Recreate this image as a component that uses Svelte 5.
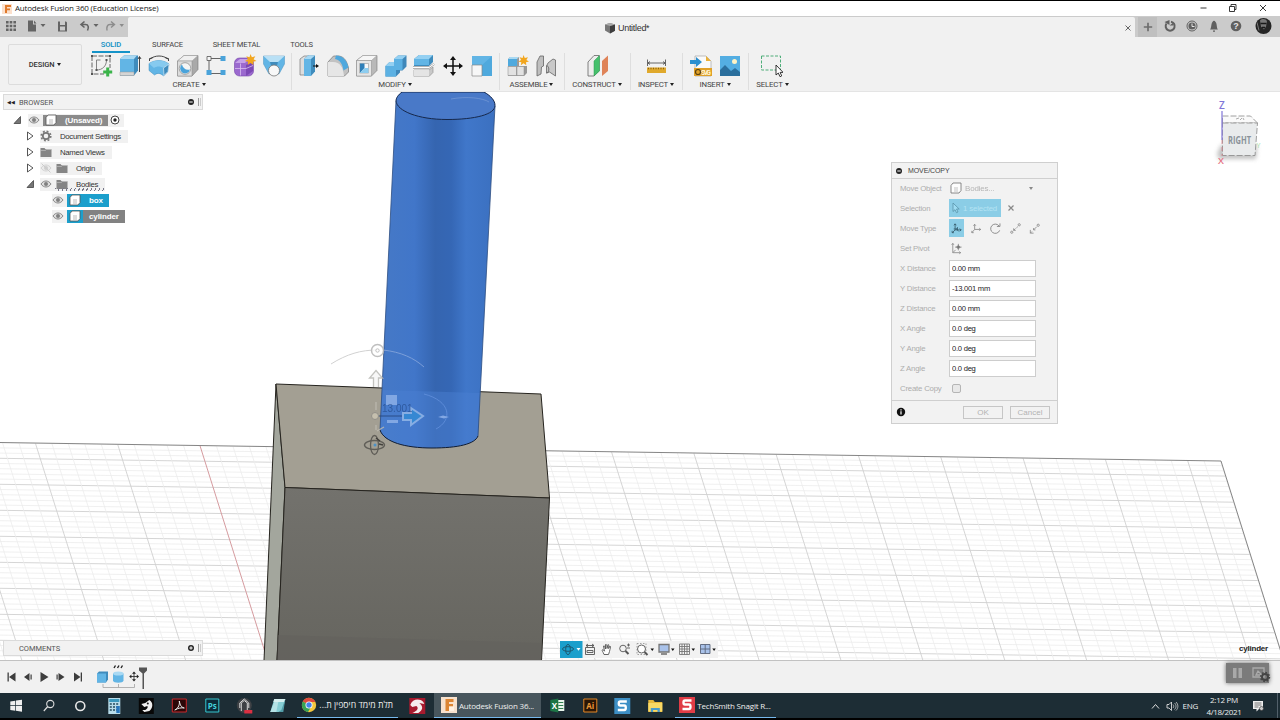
<script lang="ts">
  const tabs = [
    { label: 'SOLID', width: 38 },
    { label: 'SURFACE', width: 75 },
    { label: 'SHEET METAL', width: 63 },
    { label: 'TOOLS', width: 67 }
  ];
  let activeTab = 'SOLID';

  const groups = [
    { label: 'CREATE', width: 204, icons: ['sketch', 'extrude', 'revolve', 'hole', 'pattern', 'form', 'derive'] },
    { label: 'MODIFY', width: 208, icons: ['presspull', 'fillet', 'shell', 'combine', 'split', 'move', 'scale'] },
    { label: 'ASSEMBLE', width: 65, icons: ['component', 'joint'] },
    { label: 'CONSTRUCT', width: 66, icons: ['plane'] },
    { label: 'INSPECT', width: 52, icons: ['measure'] },
    { label: 'INSERT', width: 66, icons: ['svgfile', 'image'] },
    { label: 'SELECT', width: 48, icons: ['select'] }
  ];

  const fields = [
    { label: 'X Distance', value: '0.00 mm' },
    { label: 'Y Distance', value: '-13.001 mm' },
    { label: 'Z Distance', value: '0.00 mm' },
    { label: 'X Angle', value: '0.0 deg' },
    { label: 'Y Angle', value: '0.0 deg' },
    { label: 'Z Angle', value: '0.0 deg' }
  ];

  const moveTypes = ['free', 'translate', 'rotate', 'points', 'position'];

  // ground grid, in window coordinates
  const slant = 0.315;
  const tilt = 0.0145;
  const columns: { x: number; kind: string }[] = [];
  for (let i = -12; i < 75; i++) {
    const major = ((i % 5) + 5) % 5 === 0;
    columns.push({ x: 35.5 + i * 16.46, kind: i === 10 ? 'axis' : major ? 'major' : 'minor' });
  }
  const rows: { y: number; kind: string }[] = [];
  for (let i = -3; i < 40; i++) {
    rows.push({ y: 458.3 + i * 5.2, kind: ((i % 5) + 5) % 5 === 0 ? 'major' : 'minor' });
  }
</script>

{#snippet tool(name: string)}
  <svg class="tool" viewBox="0 0 24 24">
    {#if name === 'sketch'}
      <path d="M3 2h18v12M3 2v18h12" fill="none" stroke="#555" stroke-width=".9" stroke-dasharray="5 1.5" />
      <path d="M7.500 6v10M7.500 16c6 0 10-4 10-10M7.500 6h4" fill="none" stroke="#777" stroke-width=".9" />
      <path d="M2 1h2v2H2zM20 1h2v2h-2zM2 19h2v2H2zM6.500 15h2v2h-2zM16.500 5h2v2h-2z" fill="#555" />
      <path d="M17.200 13.500h3v3h3v3h-3v3h-3v-3h-3v-3h3z" fill="#3bb44a" />
    {:else if name === 'extrude'}
      <path d="M2 5l4-3.500h14v15l-4 5H2z" fill="#3f8cbd" />
      <path d="M2 5l4-3.500h13l-3 3.500z" fill="#a9d9f3" />
      <path d="M2 5h14v13H2z" fill="#62b5e5" />
      <path d="M2 18h14v3.500H2z" fill="#d5d5d5" stroke="#999" stroke-width=".5" />
      <path d="M21.500 18V3M20 5l1.500-2.500L23 5" fill="none" stroke="#333" stroke-width=".9" />
    {:else if name === 'revolve'}
      <path d="M2 9.500c6-4 14-4 20 .5l-1.500 8-4 4c-3-3-6-3.500-9-1L2 16.500z" fill="#62b5e5" stroke="#3f8cbd" stroke-width=".5" />
      <path d="M2 9.500c6-4 14-4 20 .5l-5.500 4c-3-2-7-2-9.500 0z" fill="#86caef" />
      <path d="M16.500 14l5.500-4-1 7.500-4 4z" fill="#3f8cbd" stroke="#d8e8f2" stroke-width=".7" />
      <path d="M3 5c5-4 13-4 18 0M2.500 7V4.500l3-.5M21.500 7V4.500l-3-.5" fill="none" stroke="#333" stroke-width=".9" />
    {:else if name === 'hole'}
      <path d="M1.500 7L8 1.500h14v14L16 22H1.500z" fill="#a9a9a9" stroke="#777" stroke-width=".6" />
      <path d="M1.500 7L8 1.500h14L16 7z" fill="#f0f0f0" stroke="#999" stroke-width=".5" />
      <path d="M1.500 7H16v15H1.500z" fill="#dcdcdc" stroke="#888" stroke-width=".5" />
      <circle cx="9" cy="14.500" r="5.800" fill="#f5f5f5" stroke="#777" stroke-width=".6" />
      <path d="M6 10.500a5 5 0 1 0 8 5c-4 1-7-1-8-5z" fill="#4aa3da" />
    {:else if name === 'pattern'}
      <path d="M5 4.500h15M5 4.500v15h15" fill="none" stroke="#555" stroke-width=".9" />
      <path d="M3 2.500h4v4H3z" fill="#f5f5f5" stroke="#555" stroke-width=".8" />
      <path d="M16.500 2h5v5h-5zM2.500 16h5v5h-5zM16.500 16h5v5h-5z" fill="#4aa3da" />
    {:else if name === 'form'}
      <rect x="1.500" y="4" width="19" height="18" rx="5" fill="#9b69cf" stroke="#7444a8" stroke-width=".6" />
      <path d="M2 9l5-4h9l-4 4z" fill="#c6a2e8" />
      <path d="M13 22V11l7-5v11z" fill="#7d49b5" />
      <path d="M7.500 9.500v12M2 14.500h11l7-3" fill="none" stroke="#d8bff0" stroke-width=".8" />
      <path d="M17.500 0l1.400 3.300 3.400-1-1.700 3 2.900 1.700-3.300.7.300 3.400-3-2.200-2.900 2.200.6-3.400-3.300-.6 3-1.800-1.600-3 3.200 1z" fill="#f2a61e" />
    {:else if name === 'derive'}
      <path d="M1.500 2h21v8L17 20H7L1.500 10z" fill="#62b5e5" stroke="#4a93c0" stroke-width=".5" />
      <path d="M1.500 2L8 8h8l6.500-6z" fill="#b9e0f5" />
      <path d="M8 8h8l-2 7h-4z" fill="#3f8cbd" />
      <circle cx="12" cy="16.500" r="5.500" fill="#f8f8f8" stroke="#777" stroke-width=".8" />
    {:else if name === 'presspull'}
      <path d="M3 5l4-3h5v19H3z" fill="#ddd" stroke="#777" stroke-width=".7" />
      <path d="M7 5l4-3.500h7v16L14 22H7z" fill="#3f8cbd" />
      <path d="M7 5l4-3.500h7L14 5z" fill="#a9d9f3" />
      <path d="M7 5h7v17H7z" fill="#62b5e5" />
      <path d="M16 12h4" stroke="#111" stroke-width="1" />
      <path d="M19 10l3 2-3 2z" fill="#111" />
    {:else if name === 'fillet'}
      <path d="M2 22V8l5.500-6H13c6 1 8 6 9.500 12v4l-4 4z" fill="#c2c2c2" stroke="#777" stroke-width=".7" />
      <path d="M2 8h5c7 0 10 5 11 14H2z" fill="#e6e6e6" />
      <path d="M10 1.500c7 0 11 5 12.500 12l-5 3C16.500 10 14 6 9 5z" fill="#4fa8dd" />
    {:else if name === 'shell'}
      <path d="M1.500 6.500L8 1.500h14v15L16.500 22h-15z" fill="#b9b9b9" stroke="#777" stroke-width=".6" />
      <path d="M1.500 6.500L8 1.500h14l-5.500 5z" fill="#f6f6f6" stroke="#999" stroke-width=".5" />
      <path d="M1.500 6.500h15V22h-15z" fill="#e6e6e6" stroke="#888" stroke-width=".5" />
      <path d="M4.500 9.500h9V19h-9z" fill="#f8f8f8" stroke="#888" stroke-width=".5" />
      <path d="M5 9.500h4.500V14L5 19z" fill="#2f7fb8" />
      <path d="M5 19l4.500-5h4v5z" fill="#8dcdf0" />
    {:else if name === 'combine'}
      <path d="M1.500 12l4-4H10V5l4-3.500h8.500v11l-4 4H16v2l-4 4H1.500z" fill="#3f88ba" />
      <path d="M10 5l4-3.500h8.500L18.500 5zM1.500 12l4-4H10v4z" fill="#94d0f2" />
      <path d="M10 5h8.500v11H12v6.500H1.500V12H10z" fill="#5cb1e3" />
    {:else if name === 'split'}
      <path d="M2 5l5-4h14v7l-4 4H2z" fill="#3f8cbd" />
      <path d="M2 5l5-4h14l-4 4z" fill="#94d0f2" />
      <path d="M2 5h15v6H2z" fill="#62b5e5" />
      <path d="M2 16h15l4-3v5.500l-4 4H2z" fill="#c9c9c9" stroke="#888" stroke-width=".6" />
      <path d="M2 16h15v6.500H2z" fill="#e4e4e4" />
      <path d="M1 13.500h16l5-3.500" fill="none" stroke="#777" stroke-width="2" />
      <path d="M1 13.500h16l5-3.500" fill="none" stroke="#fff" stroke-width="1.200" />
    {:else if name === 'move'}
      <path d="M12 4v16M4 12h16" stroke="#111" stroke-width="1.500" />
      <path d="M12 2l3 4H9zM12 22l-3-4h6zM2 12l4-3v6zM22 12l-4 3V9z" fill="#111" />
    {:else if name === 'scale'}
      <path d="M2 2h20v20H2z" fill="#4fa9dd" />
      <path d="M2 2h20L12 11H2z" fill="#62b5e5" />
      <path d="M2 11h10v11H2z" fill="#f7f7f7" stroke="#888" stroke-width=".7" />
    {:else if name === 'component'}
      <path d="M2 5l2-2h9v9h8v7l-3 3H2z" fill="#999" />
      <path d="M2 5h9v7H2z" fill="#4fa9dd" />
      <path d="M2 5l2-2h9l-2 2z" fill="#a9d9f3" />
      <path d="M2 12.500h8.500v9H2zM11 12.500h7v9h-7z" fill="#e2e2e2" stroke="#888" stroke-width=".5" />
      <path d="M17.500 1l1.300 3 3.200-.8-1.600 2.700 2.600 1.600-3 .7.300 3.100-2.800-2-2.700 2 .6-3.100-3.100-.6 2.800-1.700-1.500-2.700 3 .8z" fill="#f2a61e" />
    {:else if name === 'joint'}
      <path d="M3 8l3-6h3.500v10l-2 1-.5 7-4 2z" fill="#bfbfbf" stroke="#666" stroke-width=".8" />
      <path d="M14 9l5-4 2.500 1v16l-6-4-3 1v-7z" fill="#c9c9c9" stroke="#666" stroke-width=".8" />
      <path d="M12.500 12c3-1 3 7 0 7" fill="none" stroke="#666" />
    {:else if name === 'plane'}
      <path d="M2 8l6-6.500h5V17l-5 5H2z" fill="#ededed" stroke="#666" stroke-width=".8" />
      <path d="M8 7l5.500-5.500V17L8 22z" fill="#45c06c" stroke="#2d9a51" stroke-width=".5" />
      <path d="M16 7l6-5.500V17l-6 5z" fill="#df8358" />
    {:else if name === 'measure'}
      <path d="M2 13.500h19V19H2z" fill="#e0a92c" />
      <path d="M3 14.500h17" stroke="#8d6410" stroke-width="1.600" stroke-dasharray="1 1.500" />
      <path d="M2.500 5.500V12M20.500 5.500V12M3 9h17M5 7.500L3 9l2 1.500M18 7.500L20 9l-2 1.500" fill="none" stroke="#444" stroke-width=".8" />
    {:else if name === 'svgfile'}
      <path d="M6 2h11l5 5v15H6z" fill="#fafafa" stroke="#999" stroke-width=".6" />
      <path d="M17 2l5 5h-5z" fill="#eab13a" />
      <path d="M5 14h18v8H5z" fill="#e0a12a" />
      <circle cx="9" cy="18" r="2.500" fill="none" stroke="#5b4310" stroke-width="1.200" />
      <text x="12" y="20.500" font-size="6.500" font-weight="bold" fill="#fff5d8" textLength="10">SVG</text>
      <path d="M1 6h6V3l6 5-6 5v-3H1z" fill="#2a8fd0" />
    {:else if name === 'image'}
      <path d="M2 2h20v20H2z" fill="#54aee2" />
      <path d="M2 22v-6l5-5 6 6 4-3 5 4v4z" fill="#2b6f9d" />
      <circle cx="16.500" cy="7.500" r="2.500" fill="#fff3c4" />
    {:else if name === 'select'}
      <path d="M2.500 2h19v14h-19z" fill="none" stroke="#3ca66c" stroke-width=".9" stroke-dasharray="3 1.500" />
      <path d="M17 11v10l2.300-2 1.700 3.700 1.700-.8-1.600-3.500h3z" fill="#fff" stroke="#222" stroke-width=".9" />
    {/if}
  </svg>
{/snippet}

{#snippet eye(off = false)}
  <svg class="glyph" viewBox="0 0 12 12" opacity={off ? 0.3 : 1}>
    <path d="M1 6c2.500-4 7.500-4 10 0-2.500 4-7.500 4-10 0z" fill="#ddd" stroke="#888" />
    <circle cx="6" cy="6" r="2" fill="#808080" />
    {#if off}<path d="M1.500 1.500l9 9" stroke="#777" />{/if}
  </svg>
{/snippet}

{#snippet folder()}
  <svg class="glyph" viewBox="0 0 12 12">
    <path d="M.5 2h4l1 1.200h6V11H.5z" fill="#858585" />
    <path d="M.5 4.500h5l1-1h5" fill="none" stroke="#c8c8c8" stroke-width=".6" />
  </svg>
{/snippet}

{#snippet cube()}
  <svg class="glyph" viewBox="0 0 12 12">
    <path d="M1 3.500L3 1h8v7.500L9 11H1z" fill="#fff" stroke="#555" stroke-width=".8" />
    <path d="M4 5h4v5H4z" fill="#ddd" />
  </svg>
{/snippet}

{#snippet twist(open = false)}
  <svg class="twist" viewBox="0 0 8 10">
    {#if open}
      <path d="M7 1.500v7H.5z" fill="#777" stroke="#333" stroke-width=".7" />
    {:else}
      <path d="M1 1v8l5.500-4z" fill="#fff" stroke="#444" stroke-width=".9" />
    {/if}
  </svg>
{/snippet}

<div class="window">
  <header class="titlebar">
    <svg class="logo" viewBox="0 0 10 10"><path d="M0 0h10v10H0z" fill="#fbe0cc" /><path d="M3 1h6v2H5v1.500h3v1.700H5V9H3z" fill="#e07a2c" /></svg>
    <span class="title">Autodesk Fusion 360 (Education License)</span>
    <svg class="win-buttons" viewBox="0 0 72 12">
      <path d="M2.500 6h6M31.500 4.500h5v5h-5zM33 4.500v-2h5v5h-1.500M62 3l6 6M68 3l-6 6" fill="none" stroke="#222" stroke-width=".9" />
    </svg>
  </header>

  <div class="strip">
    <div class="quick">
      <svg viewBox="0 0 128 21">
        <g fill="#646464">
          <path d="M6 5h2.600v2.600H6zM9.700 5h2.600v2.600H9.700zM13.400 5H16v2.600h-2.600zM6 8.700h2.600v2.600H6zM9.700 8.700h2.600v2.600H9.700zM13.400 8.700H16v2.600h-2.600zM6 12.400h2.600V15H6zM9.700 12.400h2.600V15H9.700zM13.400 12.400H16V15h-2.600z" />
          <path d="M28 4.500h5v4h3v7h-8zM34 4.500l2.500 3H34zM40.500 8h5l-2.500 3z" />
          <path d="M58 5.500h8l1 1v9h-9zM60 5.500V9h5V5.500zM60 10.500v4h5v-4z" fill-rule="evenodd" />
          <path d="M93.500 8h5L96 11z" />
        </g>
        <path d="M84.500 5.500l-3.500 3 3.500 3M81.500 8.500h4c3 0 3.500 3 2 6" fill="none" stroke="#646464" stroke-width="1.600" />
        <path d="M111 5.500l3.500 3-3.500 3M114 8.500h-4c-3 0-3.500 3-3 6" fill="none" stroke="#8c8c8c" stroke-width="1.400" />
        <path d="M119.500 8h4.500l-2.200 3z" fill="#8c8c8c" />
      </svg>
    </div>
    <div class="doc-tab">
      <svg class="doc-cube" viewBox="0 0 12 12"><path d="M1 2.500L6 1l5 1.500v6.300L6 11.500 1 8.500z" fill="#777" /><path d="M6 4l5-1.500v6.300L6 11.500z" fill="#3e3e3e" /><path d="M1 2.500L6 4l5-1.500L6 1z" fill="#aaa" /></svg>
      <span>Untitled*</span>
      <svg class="tab-close" viewBox="0 0 8 8"><path d="M1.500 1.500l5 5M6.500 1.500l-5 5" stroke="#666" /></svg>
    </div>
    <div class="new-tab"><svg viewBox="0 0 10 10"><path d="M5 .8v8.400M.8 5h8.400" stroke="#6d6d6d" stroke-width="1.700" /></svg></div>
    <svg class="strip-icons" viewBox="0 0 120 21">
      <path d="M8.500 7.500A4.500 4.500 0 1 0 13 5.700" fill="none" stroke="#606060" stroke-width="2" />
      <path d="M6.500 6l5-2v5zM11.500 9.500h4v-3z" fill="#606060" />
      <circle cx="34" cy="10" r="5" fill="#d0d0d0" stroke="#606060" />
      <circle cx="34" cy="10" r="3.600" fill="#606060" />
      <path d="M34 7.500v3h2.500" fill="none" stroke="#e5e5e5" />
      <path d="M52 13.500c1.500-1 1.200-7 2.500-7.500.6-1.700 2.400-1.700 3 0 1.500.5 1 6.500 2.500 7.500zM55 14.500h2v1.200h-2z" fill="#606060" />
      <circle cx="78" cy="10" r="5.300" fill="#606060" />
      <text x="78" y="13.300" text-anchor="middle" font-size="9" font-weight="bold" fill="#e5e5e5">?</text>
      <circle cx="105.500" cy="10" r="8" fill="#252525" />
      <path d="M102 4.500c2-2 6-2 7 1l-1 5-2 3-3-3z" fill="#777" />
      <path d="M102.500 7.500h6M104 11.500h3" stroke="#191919" stroke-width="1.300" />
      <path d="M99 6.500l2 8" stroke="#777" />
    </svg>
  </div>

  <div class="ribbon">
    <button class="workspace">DESIGN <i class="caret"></i></button>
    <div class="ribbon-main">
      <nav class="tabs">
        {#each tabs as tab}
          <button class="tab" class:active={tab.label === activeTab} style="width: {tab.width}px" on:click={() => (activeTab = tab.label)}>{tab.label}</button>
        {/each}
      </nav>
      <div class="groups">
        {#each groups as group}
          <div class="group" style="width: {group.width}px">
            <div class="group-icons">
              {#each group.icons as name}
                {@render tool(name)}
              {/each}
            </div>
            <div class="group-label">{group.label}<i class="caret"></i></div>
          </div>
        {/each}
      </div>
    </div>
  </div>

  <main class="viewport">
    <svg class="scene" viewBox="0 92 1280 568">
      <defs>
        <clipPath id="ground"><path d="M0 442.500L1221 461 1284 661H0z" /></clipPath>
        <linearGradient id="cyl" x1="0" x2="1">
          <stop offset="0" stop-color="#4679c6" />
          <stop offset=".3" stop-color="#4176c9" />
          <stop offset=".48" stop-color="#3565b0" />
          <stop offset=".62" stop-color="#3567b5" />
          <stop offset=".75" stop-color="#4077ca" />
          <stop offset="1" stop-color="#3b70c0" />
        </linearGradient>
        <linearGradient id="front" x1="0" x2="0" y1="0" y2="1">
          <stop offset="0" stop-color="#73726d" />
          <stop offset="1" stop-color="#66655f" />
        </linearGradient>
      </defs>

      <g clip-path="url(#ground)">
        {#each rows as row}
          <line class={row.kind} x1="0" y1={row.y} x2="1280" y2={row.y + 1280 * tilt} />
        {/each}
        {#each columns as col}
          <line class={col.kind} x1={col.x} y1={443 + col.x * 0.015} x2={col.x + 222 * slant} y2={665 + col.x * 0.015} />
        {/each}
      </g>
      <path d="M0 442.500L1221 461 1281 652" fill="none" stroke="#777" stroke-width=".9" />

      <g stroke="#26241f" stroke-linejoin="round">
        <path d="M276 384l9 103.500-8 173h-13z" fill="#a3a69d" />
        <path d="M276 384l265 10 8.500 104L285 487.500z" fill="#a39f93" />
        <path d="M285 487.500L549.500 498l-8 162.500H277z" fill="url(#front)" />
      </g>
      <path d="M277.500 635l264 8v17h-264z" fill="#62615c" opacity=".55" />

      <path d="M402 92c-4 3-6 6-6 9L380 430c4 12 25 18 52 18 26 0 43-4 46-12l17-330c0-5-4-10-11-14z" fill="url(#cyl)" />
      <path d="M382 390l98 3-2 43c-3 8-20 12-46 12-27 0-48-6-52-18z" fill="#4b80d3" opacity=".45" />
      <path d="M402 92c-4 3-6 6-6 9 1 10 22 18.500 51 18.500 28 0 48-5 48-14 0-5-4-9.500-11-13.500z" fill="#4979c8" stroke="#16284b" />
      <path d="M396 101L380 430M495 106l-17 330" stroke="#2c4d80" stroke-width=".8" fill="none" />
      <path d="M380 430c4 12 25 18 52 18 26 0 43-4 46-12" fill="none" stroke="#111d33" />
      <path d="M451 99c16-3 32-1 38 3" fill="none" stroke="#8aa9dc" stroke-width=".7" opacity=".7" />

      <g class="manipulator" fill="none">
        <path d="M331 364c16-10 30-14 46-14" stroke="#c9c9c9" />
        <path d="M383 350c18 2 31 8 41 17" stroke="#86a6dc" />
        <circle cx="377.500" cy="350.500" r="6" fill="#fff" fill-opacity=".75" stroke="#b5b5b5" stroke-width="1.500" />
        <circle cx="377.500" cy="350.500" r="1.700" stroke="#b5b5b5" />
        <path d="M373.500 387v-9h-4l6.500-7.500 6.500 7.500h-4v9" fill="#eee" fill-opacity=".6" stroke="#b9b9b5" stroke-width="1.300" />
        <path d="M376 402v8M376 425v5M377 431l7-4" stroke="#bdbab1" stroke-width="1.300" />
        <path d="M386 395h11v10h-11z" fill="#8db0e8" />
        <path d="M387 420h11v3h-11z" fill="#8db0e8" />
        <path d="M424 394c27 7 29 26 12 35" stroke="#618fdb" />
        <path d="M438 417l5-1.500 6 1.500-5 1.500z" fill="#8fb2ea" />
        <path d="M375 416h30" stroke="#25457d" />
        <path d="M403 413h8v-5l12 8-12 9v-5h-8z" fill="#348bd5" stroke="#93b7e8" stroke-width="2" />
        <circle cx="375" cy="416" r="3.500" fill="#cbc5b3" stroke="#8e8c86" />
        <ellipse cx="374.500" cy="445" rx="10" ry="4.500" stroke="#55534e" stroke-width="1.400" />
        <ellipse cx="374.500" cy="445" rx="4" ry="9.500" stroke="#55534e" stroke-width="1.300" />
        <circle cx="375" cy="445" r="1.500" fill="#3f8fd0" />
        <path d="M376 438l4 3M379 444l4 1" stroke="#33322f" stroke-width="1.500" />
      </g>
      <text class="readout" x="382" y="412">13.001</text>
    </svg>

    <section class="browser">
      <div class="bar">
        <span class="rewind">◀◀</span>
        <span class="bar-title">BROWSER</span>
        <svg class="dot" viewBox="0 0 8 8"><circle cx="4" cy="4" r="3" fill="#222" /><path d="M2.300 4h3.400" stroke="#fff" /></svg>
        <i class="grip"></i>
      </div>
      <ul class="tree">
        <li class="root">
          {@render twist(true)}
          <div class="node">
            {@render eye()}
            <span class="tag dark">{@render cube()}<b class="root-name">(Unsaved)</b></span>
            <svg class="glyph" viewBox="0 0 12 12"><circle cx="6" cy="6" r="4" fill="#fff" stroke="#444" /><circle cx="6" cy="6" r="1.700" fill="#222" /></svg>
          </div>
        </li>
        <li class="level1">
          {@render twist()}
          <div class="node">
            <svg class="glyph" viewBox="0 0 12 12"><circle cx="6" cy="6" r="3.200" fill="none" stroke="#777" stroke-width="1.800" /><circle cx="6" cy="6" r="4.800" fill="none" stroke="#777" stroke-width="1.600" stroke-dasharray="1.900 1.870" /></svg>
            <span class="name">Document Settings</span>
          </div>
        </li>
        <li class="level1">
          {@render twist()}
          <div class="node">{@render folder()}<span class="name">Named Views</span></div>
        </li>
        <li class="level1">
          {@render twist()}
          <div class="node">{@render eye(true)}<span class="gap"></span>{@render folder()}<span class="name">Origin</span></div>
        </li>
        <li class="level1">
          {@render twist(true)}
          <div class="node hatched">{@render eye()}<span class="gap"></span>{@render folder()}<span class="name">Bodies</span></div>
        </li>
        <li class="level2">
          <div class="node">{@render eye()}<span class="tag blue">{@render cube()}<b class="body-name">box</b></span></div>
        </li>
        <li class="level2">
          <div class="node">{@render eye()}<span class="tag blue">{@render cube()}<b class="body-name gray">cylinder</b></span></div>
        </li>
      </ul>
    </section>

    <svg class="viewcube" viewBox="0 0 56 76">
      <defs><filter id="soft" x="-30%" y="-30%" width="160%" height="160%"><feGaussianBlur stdDeviation="2" /></filter></defs>
      <path d="M7 58l4-9h36l-1 14H9z" fill="#999" opacity=".6" filter="url(#soft)" />
      <path d="M12.500 20h28l7 7H12.500z" fill="#fafafa" stroke="#888" stroke-width=".8" stroke-dasharray="6 2" />
      <path d="M12.500 27h35l-2.500 32.500H12.500z" fill="#e9ebec" stroke="#888" stroke-width=".8" stroke-dasharray="6 2" />
      <path d="M26 23l3-1M30 24l2-2M34 24l-1-2" stroke="#777" stroke-width=".6" />
      <path d="M12 15v29" stroke="#8075d8" stroke-width="1.200" />
      <path d="M12 44v16" stroke="#d9848e" stroke-width=".8" stroke-dasharray="4 3" />
      <text class="axis-z" x="12" y="13">Z</text>
      <text class="axis-x" x="11" y="68">X</text>
      <text class="axis-y" x="48.500" y="51.500">Y</text>
      <text class="face" x="18" y="47.500" textLength="23" lengthAdjust="spacingAndGlyphs">RIGHT</text>
    </svg>

    <section class="dialog">
      <div class="dialog-head">
        <svg class="dot" viewBox="0 0 8 8"><circle cx="4" cy="4" r="3" fill="#222" /><path d="M2.300 4h3.400" stroke="#fff" /></svg>
        <span>MOVE/COPY</span>
      </div>
      <div class="dialog-body">
        <div class="field">
          <span class="label">Move Object</span>
          <div class="picker">{@render cube()}<span>Bodies...</span><i class="caret"></i></div>
        </div>
        <div class="field">
          <span class="label">Selection</span>
          <div class="selected">
            <svg viewBox="0 0 10 12"><path d="M2 1v8.500l2-1.800 1.500 3 1.500-.7-1.500-3h2.700z" fill="#9edcf2" stroke="#5893aa" stroke-width=".8" /></svg>
            1 selected
          </div>
          <svg class="clear" viewBox="0 0 8 8"><path d="M1.500 1.500l5 5M6.500 1.500l-5 5" stroke="#888" stroke-width="1.200" /></svg>
        </div>
        <div class="field">
          <span class="label">Move Type</span>
          <div class="types">
            {#each moveTypes as type, i}
              <button class="type" class:on={i === 0} aria-label={type}>
                <svg viewBox="0 0 14 14" fill="none" stroke={i === 0 ? '#34596a' : '#888'} stroke-width=".9">
                  {#if type === 'free'}
                    <path d="M5.500 2v6.500h6.500M5.500 8.500L2.500 11.500M4.200 3.500L5.500 2l1.300 1.500M10.500 7L12 8.500 10.500 10M2.300 9.500v2h2M8 5.500v3M4 7.500h4M7 7l2 3" />
                  {:else if type === 'translate'}
                    <path d="M5 2.500V8h6.500M5 8l-3 3.500M3.700 4L5 2.500 6.300 4M10 6.700L11.500 8 10 9.300M2 9.500v2h2" />
                  {:else if type === 'rotate'}
                    <path d="M11 4.500A5 5 0 1 0 11.500 9M11.800 1.500v3.300H8.500" stroke-width="1" />
                  {:else if type === 'points'}
                    <circle cx="3" cy="11" r="1.200" /><circle cx="11" cy="3" r="1.200" /><path d="M9.500 5L8 6.300M7 7L5 9M5 6.800V9h2.300" />
                  {:else}
                    <path d="M2.500 8.500V12H6M2.500 12l1.800-1.800M9.500 5L6 8.500M6 6.500v2h2" /><circle cx="11" cy="3.500" r="1.200" />
                  {/if}
                </svg>
              </button>
            {/each}
          </div>
        </div>
        <div class="field">
          <span class="label">Set Pivot</span>
          <svg class="pivot" viewBox="0 0 14 14" fill="none" stroke="#888" stroke-width=".9"><path d="M3 1.500V11.500h8.500M1.800 3L3 1.500 4.200 3M10 10.300l1.500 1.200L10 12.700M3 11.500l3-3" /><path d="M9 2v7M5.500 5.500h7" /><path d="M9 3.500l2 2-2 2-2-2z" fill="#777" /></svg>
        </div>
        {#each fields as field, i}
          <div class="field">
            <label for="f{i}">{field.label}</label>
            <input id="f{i}" bind:value={field.value} />
          </div>
        {/each}
        <div class="field">
          <span class="label">Create Copy</span>
          <span class="check"></span>
        </div>
      </div>
      <div class="dialog-foot">
        <svg class="info" viewBox="0 0 10 10"><circle cx="5" cy="5" r="4.200" fill="#111" /><path d="M5 4.300v3.200M5 2.200v1.200" stroke="#fff" stroke-width="1.200" /></svg>
        <button class="ok">OK</button>
        <button class="cancel">Cancel</button>
      </div>
    </section>

    <div class="bar comments">
      <span class="bar-title">COMMENTS</span>
      <svg class="dot" viewBox="0 0 8 8"><circle cx="4" cy="4" r="3" fill="#222" /><path d="M2.300 4h3.400M4 2.300v3.400" stroke="#fff" /></svg>
      <i class="grip"></i>
    </div>

    <svg class="navbar" viewBox="0 0 158 17">
      <path d="M0 0h158v17H0z" fill="#f2f2f2" />
      <path d="M0 0h22.500v17H0z" fill="#1b9fcc" />
      <g fill="none" stroke="#1c5066" stroke-width=".9"><ellipse cx="8" cy="8" rx="5.500" ry="2.300" /><ellipse cx="8" cy="8.500" rx="2.300" ry="5" /></g>
      <path d="M16.500 7h4l-2 2.700z" fill="#fff" />
      <g fill="none" stroke="#555" stroke-width=".9">
        <path d="M25.500 6.500h9v7h-9zM27 9.500h6v2h-6zM26 4.500h8M28 3l-2 1.500L28 6M32 3l2 1.500L32 6" />
        <path d="M44 13.500c-1-3-2.500-4-1.500-4.800 1 0 1.500 1 2 1.500L43.500 5c1-1 1.500 1 2 3V3.500c1-1 1.500 1 1.500 4l1-4c1.200 0 .8 2 .5 4l1.500-2.500c1 .5 0 3-.5 5.500l-1 3z" fill="#fff" />
        <circle cx="63" cy="7.500" r="3.300" /><path d="M65.500 10l3 3" stroke-width="2" /><path d="M67 4h3M68.500 2.500v3M67 7h3" />
        <path d="M77 2.500h9v11h-9z" stroke-dasharray="1.500 1.500" stroke="#999" /><circle cx="81.500" cy="8" r="4" fill="#fff" /><path d="M84.500 11l3 3" stroke-width="2" />
        <path d="M99 3.500h10v7.500h-10z" fill="#a9c2ea" stroke="#777" stroke-width="1.300" /><path d="M101 13h6" stroke-width="1.300" />
        <path d="M119.500 3h10v10.500h-10zM122 3v10.500M124.500 3v10.500M127 3v10.500M119.500 5.500h10M119.500 8h10M119.500 10.500h10" stroke="#777" />
        <path d="M140.500 3.500h9.500v9h-9.500zM145.200 3.500v9M140.500 8h9.500" fill="#a9c2ea" stroke="#5a6478" />
      </g>
      <path d="M90.500 7.500h3.500l-1.700 2.500zM111 7.500h3.500l-1.700 2.500zM131.500 7.500h3.500l-1.700 2.500zM152.300 7.500h3.500l-1.700 2.500z" fill="#111" />
    </svg>
    <span class="hint">cylinder</span>
  </main>

  <footer class="timeline">
    <svg class="playback" viewBox="0 0 90 33">
      <g fill="#3d3d3d">
        <path d="M7.500 11.500h1.300v9H7.500zM15.500 11.500v9L9 16zM29.500 12v8L24 16zM30.500 13.500h1.200v5h-1.200zM40.500 11v10l8-5zM56.500 13.500h1.200v5h-1.200zM58.500 12v8l6-4zM74 11.500v9l6.500-4.500zM80.700 11.500H82v9h-1.300z" />
      </g>
    </svg>
    <svg class="history" viewBox="0 0 60 33">
      <path d="M7 12.500l2-2h9v8l-2 3H7z" fill="#3f8cbd" /><path d="M7 12.500h9v9H7z" fill="#62b5e5" />
      <path d="M23 12.500v7c0 3 10.500 3 10.500 0v-7z" fill="#62b5e5" /><ellipse cx="28.300" cy="12.500" rx="5.200" ry="2" fill="#a9d9f3" />
      <path d="M24 7l1.500-2.500M27.500 7L29 4.500M31 7l1.500-2.500" stroke="#222" stroke-width="1.400" />
      <path d="M44 12v7M40.500 15.500h7" stroke="#333" stroke-width=".9" /><path d="M44 10.500l2 2.200h-4zM44 20.500l-2-2.200h4zM39.200 15.500l2.200-2v4zM49 15.500l-2.200 2v-4z" fill="#222" />
      <path d="M13 23v3.500h31.500V23M28.500 23v3.500" fill="none" stroke="#aaa" stroke-width=".9" />
      <path d="M49 6.500h8v3l-3 3V28h-1.500V12.500L49 9.500z" fill="#555" />
    </svg>
    <svg class="recorder" viewBox="0 0 46 26">
      <path d="M1 2h43v20H1z" fill="#7b7b7b" />
      <path d="M8 7h3.500v10H8zM13.500 7H17v10h-3.500z" fill="#a9a9a9" />
      <path d="M28 7h11v9H28zM31 14l2-4 4 4z" fill="none" stroke="#aaa" stroke-width="1.300" />
      <circle cx="40" cy="16" r="3" fill="none" stroke="#444" stroke-width="2" /><circle cx="40" cy="16" r="4.500" fill="none" stroke="#444" stroke-width="1.300" stroke-dasharray="1.700 1.800" />
    </svg>
  </footer>

  <div class="taskbar">
    <svg class="task" viewBox="0 0 32 25"><path d="M10 8.500l5-.8v4.600h-5zM15.700 7.600l6-.9v5.600h-6zM10 13h5v4.700l-5-.7zM15.700 13h6v5.700l-6-.9z" fill="#eee" /></svg>
    <svg class="task" viewBox="0 0 32 25"><circle cx="17" cy="11" r="3.600" fill="none" stroke="#ddd" stroke-width="1.100" /><path d="M14.500 13.500L10.500 18" stroke="#ddd" stroke-width="1.200" /></svg>
    <svg class="task" viewBox="0 0 32 25"><circle cx="15" cy="13" r="4.500" fill="none" stroke="#e8e8e8" stroke-width="1.600" /></svg>
    <svg class="task" viewBox="0 0 32 25"><path d="M10 5h12v16H10z" fill="#b7dcea" /><path d="M11 6h10v3H11z" fill="#3a98bd" /><path d="M11.500 11h9M11.500 14h9M11.500 17h9" stroke="#476d7e" stroke-width="1.800" stroke-dasharray="2 1.200" /><path d="M18 13h3.500v7H18z" fill="#2776bd" /></svg>
    <svg class="task" viewBox="0 0 32 25"><path d="M8.500 5h15v16h-15z" fill="#070707" /><path d="M11 11l4-1 4-3c4 2 4 8 0 11l-5 1-2-2 3 0c2-1 3-3 2-4l-3 1z" fill="#eee" /><circle cx="17.500" cy="10.500" r="1" fill="#111" /></svg>
    <svg class="task" viewBox="0 0 32 25"><path d="M9 6h14v13H9z" fill="#2b0707" stroke="#c8292c" /><path d="M11.500 17c4-2 5-6 4.500-9 1 5 2 6 5 7-3-.5-6 0-9.500 2z" fill="none" stroke="#eee" /></svg>
    <svg class="task" viewBox="0 0 32 25"><path d="M9.500 6h13v13h-13z" fill="#0c2b39" stroke="#36c6cf" /><text x="16" y="16" text-anchor="middle" font-size="8" font-weight="bold" fill="#43d0dc">Ps</text></svg>
    <svg class="task" viewBox="0 0 32 25"><circle cx="16" cy="12.500" r="7.500" fill="#3e4145" /><path d="M13 18v-8l3-2.500 3 2.500v8M11.500 15v-5l4.500-4 4.500 4v5" fill="none" stroke="#d5d5d5" /><path d="M16 17h8v3.500h-8z" fill="#db3042" /></svg>
    <svg class="task" viewBox="0 0 32 25"><path d="M13 6h11l-3 13H9z" fill="#86cdd3" /><path d="M13 6h11l-1 3H12z" fill="#d6eeee" /><path d="M9 19l4-10h4l-2 10z" fill="#b5e2e5" /><path d="M20 17l4-11-2 13h-5z" fill="#539da8" /></svg>
    <div class="task-wide chrome">
      <svg viewBox="0 0 16 16"><circle cx="8" cy="8" r="7.200" fill="#f4c63d" /><path d="M8 8L1.800 4.400A7.200 7.200 0 0 1 14.500 5H8z" fill="#df4a3e" /><path d="M8 8L1.800 4.400A7.200 7.200 0 0 0 7 15.100l3-5z" fill="#38a355" /><circle cx="8" cy="8" r="3.500" fill="#fff" /><circle cx="8" cy="8" r="2.700" fill="#4384e8" /></svg>
      <span class="hebrew" dir="rtl">תלת מימד חיספין ת...</span>
    </div>
    <svg class="task" viewBox="0 0 32 25"><path d="M8 5h16v16H8z" fill="#a71a2e" /><path d="M9 12c2-6 9-7 13-3l1 2-5-1c4 3 4 7-1 10h-6c5-2 7-5 4-7l-4 1z" fill="#f6eded" /></svg>
    <div class="task-wide fusion">
      <svg viewBox="0 0 16 16"><path d="M0 0h16v16H0z" fill="#f7e1cd" /><path d="M4.500 2h8v3H8v2h4v2.500H8V14H4.500z" fill="#dc8533" /><path d="M8 9.500h5V14H8z" fill="#fff1e2" /></svg>
      <span>Autodesk Fusion 36...</span>
    </div>
    <svg class="task" viewBox="0 0 32 25"><path d="M15 7h8v11h-8z" fill="#e8f5ec" /><path d="M17 9.500h5M17 12.500h5M17 15.500h5" stroke="#2f7d4f" /><path d="M9 7l8-1.500v14L9 18z" fill="#1d7445" /><text x="13" y="15.500" text-anchor="middle" font-size="8" font-weight="bold" fill="#fff">X</text></svg>
    <svg class="task" viewBox="0 0 32 25"><path d="M9.500 6h13v13h-13z" fill="#2a1606" stroke="#e58827" /><text x="16" y="15.500" text-anchor="middle" font-size="8" font-weight="bold" fill="#f09a3a">Ai</text></svg>
    <svg class="task" viewBox="0 0 32 25"><path d="M8 5h16v16H8z" fill="#3d8fc5" /><path d="M20.500 8.500h-6.500q-1.500 0-1.500 2t1.500 2h4q1.500 0 1.500 2.200t-1.500 2.300h-6.500" fill="none" stroke="#fff" stroke-width="2.400" /></svg>
    <svg class="task" viewBox="0 0 32 25"><path d="M9 7h5l1.500 2H23v10H9z" fill="#e8b93c" /><path d="M9 10h14v8.500H9z" fill="#f9d965" /><path d="M11.500 19v-4h9v4h-2.300v-2h-4.400v2z" fill="#4b9bc9" /></svg>
    <div class="task-wide snagit">
      <svg viewBox="0 0 16 16"><path d="M0 0h16v16H0z" fill="#e03c46" /><path d="M12.500 3.500H6q-1.500 0-1.500 2T6 7.500h4q1.500 0 1.500 2.200T10 12H3.500" fill="none" stroke="#fff" stroke-width="2.400" /></svg>
      <span>TechSmith Snagit R...</span>
    </div>
    <div class="tray">
      <svg class="tray-icons" viewBox="0 0 28 12"><path d="M1 8.500l3.500-4 3.500 4" fill="none" stroke="#ddd" /><path d="M16 4.500h2l2.500-2.500v8.500L18 8h-2z" fill="none" stroke="#ddd" stroke-width=".9" /><path d="M22 4.500c1 1 1 2.500 0 3.500M23.500 3c2 2 2 4.500 0 6.500M25 2c2.500 2.500 2.500 6 0 8.500" fill="none" stroke="#ccc" stroke-width=".8" /></svg>
      <span class="lang">ENG</span>
      <div class="clock"><span>2:12 PM</span><span>4/18/2021</span></div>
      <svg class="notice" viewBox="0 0 12 12"><path d="M1 1h10v8H7l-2.500 2.500V9H1z" fill="#eee" /><path d="M2.500 3h7M2.500 5h7M2.500 7h4" stroke="#555" stroke-width=".8" /><circle cx="9.500" cy="8.500" r="2" fill="#ccc" stroke="#333" stroke-width=".6" /></svg>
    </div>
  </div>
</div>

<style>
  :global(body) {
    overflow: hidden;
  }

  .window {
    display: flex;
    flex-direction: column;
    width: 1280px;
    height: 720px;
    box-sizing: border-box;
    border-top: 1px solid #000;
    border-bottom: 2px solid #000;
    font-family: "Liberation Sans", Arial, sans-serif;
    font-size: 8px;
    color: #444;
    background: #fff;
    overflow: hidden;
  }

  svg {
    display: block;
    flex: none;
  }

  button {
    padding: 0;
    border: none;
    background: none;
    font: inherit;
    color: inherit;
  }

  .caret {
    display: inline-block;
    border: 2px solid transparent;
    border-top: 3px solid #222;
    border-bottom: none;
  }

  /* title and document strip */
  .titlebar {
    display: flex;
    align-items: center;
    flex: none;
    height: 15px;
    color: #222;
    font-family: "Open Sans", sans-serif;
  }

  .logo {
    width: 10px;
    height: 10px;
    margin: 0 3px 0 2px;
  }

  .title {
    flex: 1;
    margin-top: -2px;
    font-size: 8px;
    letter-spacing: -0.2px;
  }

  .win-buttons {
    width: 72px;
    height: 12px;
    margin-right: 10px;
    margin-top: -2px;
  }

  .strip {
    display: flex;
    height: 21px;
    flex: none;
    background: #cbcbcb;
  }

  .quick {
    width: 128px;
  }

  .doc-tab {
    display: flex;
    align-items: center;
    width: 1007px;
    margin-top: 1px;
    padding-top: 1px;
    box-sizing: border-box;
    background: #f1f1f1;
    border-radius: 2px 2px 0 0;
    color: #333;
    font-size: 9px;
    letter-spacing: -0.3px;
  }

  .doc-cube {
    width: 12px;
    height: 12px;
    margin: 0 2px 0 476px;
  }

  .tab-close {
    width: 8px;
    height: 8px;
    margin: 0 3px 0 auto;
  }

  .new-tab {
    display: grid;
    place-items: center;
    width: 19px;
    margin: 1px 0 0 3px;
    background: #bfbfbf;
  }

  .new-tab svg {
    width: 10px;
  }

  .strip-icons {
    width: 120px;
    margin-left: 1px;
  }

  /* ribbon */
  .ribbon {
    display: flex;
    flex: none;
    height: 55px;
    background: #f1f1f1;
    font-family: Roboto, sans-serif;
    box-sizing: border-box;
    border-bottom: 1px solid #e4e4e4;
  }

  .workspace {
    width: 74px;
    height: 41px;
    margin: 7px 5px 0 8px;
    box-sizing: border-box;
    border: 1px solid #dcdcdc;
    border-radius: 2px;
    color: #333;
    font-weight: 500;
    font-size: 7.5px;
    letter-spacing: -0.05px;
  }

  .workspace .caret {
    margin: 0 0 1.5px 1px;
  }

  .tabs {
    display: flex;
    height: 16px;
    padding-left: 5px;
  }

  .tab {
    box-sizing: border-box;
    border-bottom: 2px solid transparent;
    font-size: 7.6px;
    letter-spacing: -0.15px;
    white-space: nowrap;
  }

  .tab.active {
    color: #0f8fc4;
    font-weight: 500;
    border-bottom-color: #1593c8;
  }

  .groups {
    display: flex;
    height: 37px;
    padding-left: 1px;
  }

  .group {
    box-sizing: border-box;
    border-right: 1px solid #dedede;
  }

  .group:last-child {
    border-right: none;
  }

  .group-icons {
    display: flex;
    justify-content: center;
    gap: 4.8px;
    height: 26px;
    align-items: center;
  }

  .group:first-child .group-icons,
  .group:last-child .group-icons {
    padding-right: 4px;
  }

  .tool {
    width: 24px;
    height: 24px;
  }

  .group-label {
    text-align: center;
    font-size: 7.8px;
    line-height: 11px;
    letter-spacing: -0.15px;
    white-space: nowrap;
    padding-right: 1px;
  }

  .group-label .caret {
    margin: 0 0 1.5px 2px;
  }

  /* canvas */
  .viewport {
    position: relative;
    flex: 1;
    min-height: 0;
    background: #fff;
  }

  .scene {
    width: 1280px;
    height: 568px;
  }

  .minor {
    stroke: #ececec;
    stroke-width: 0.8;
  }

  .major {
    stroke: #d0d0d0;
    stroke-width: 0.9;
  }

  .axis {
    stroke: #d59b9f;
    stroke-width: 1;
  }

  .manipulator {
    opacity: 0.85;
  }

  .readout {
    font-size: 10px;
    fill: #264f91;
    opacity: 0.75;
  }

  .browser {
    position: absolute;
    left: 3px;
    top: 2px;
    width: 200px;
  }

  .bar {
    display: flex;
    align-items: center;
    height: 16px;
    box-sizing: border-box;
    padding-left: 3px;
    background: #f2f2f2;
    border: 1px solid #dadada;
    color: #555;
    font-family: Roboto, sans-serif;
  }

  .rewind {
    width: 12px;
    font-size: 4.5px;
    letter-spacing: -0.5px;
    color: #222;
  }

  .bar-title {
    flex: 1;
    font-size: 7.5px;
    letter-spacing: -0.05px;
  }

  .dot {
    width: 8px;
    height: 8px;
  }

  .grip {
    width: 1px;
    height: 8px;
    margin: 0 1px 0 3px;
    border-left: 1px solid #999;
    border-right: 1px solid #ccc;
  }

  .tree {
    margin: 2px 0 0;
    padding: 0;
    list-style: none;
  }

  .tree li {
    display: flex;
    align-items: center;
    height: 16px;
  }

  .tree .root {
    padding-left: 10px;
  }

  .tree .level1 {
    padding-left: 22px;
  }

  .tree .level2 {
    padding-left: 49px;
  }

  .twist {
    width: 9px;
    height: 10px;
    margin-right: 6px;
  }

  .level1 .twist {
    margin: 0 5px 0 1px;
  }

  .glyph {
    width: 12px;
    height: 12px;
  }

  .node {
    display: flex;
    align-items: center;
    height: 13px;
    background: #f1f1f1;
  }

  .root .node {
    padding-right: 3px;
  }

  .gap {
    width: 4px;
  }

  .name {
    padding: 1px 7px 0 8px;
    font-size: 7.8px;
    letter-spacing: -0.3px;
    color: #333;
  }

  .tag {
    display: flex;
    align-items: center;
    height: 13px;
    margin-left: 3px;
    padding-left: 2px;
    color: #fff;
  }

  .tag.dark {
    height: 11px;
    background: #8b8b8b;
    margin-right: 1px;
  }

  .tag.blue {
    background: #1b9fcc;
  }

  .root-name {
    padding: 1px 6px 0 8px;
    font-size: 8px;
    letter-spacing: -0.15px;
  }

  .body-name {
    height: 13px;
    line-height: 14px;
    margin-left: 2px;
    padding: 0 6px;
    font-size: 8px;
    letter-spacing: -0.1px;
  }

  .gray {
    background: #828282;
  }

  .hatched {
    position: relative;
  }

  .hatched::after {
    content: '';
    position: absolute;
    left: 15px;
    right: 0;
    bottom: 0;
    height: 3px;
    background: repeating-linear-gradient(120deg, #778 0 1px, transparent 1px 3.5px);
  }

  .viewcube {
    position: absolute;
    left: 1210px;
    top: 4px;
    width: 56px;
    height: 76px;
    font-family: "Open Sans", sans-serif;
    text-anchor: middle;
  }

  .axis-z {
    font-size: 10px;
    font-weight: 600;
    fill: #8075d8;
  }

  .axis-x {
    font-size: 9.5px;
    font-weight: 600;
    fill: #e57484;
  }

  .axis-y {
    font-size: 7px;
    fill: #a3dfa6;
  }

  .face {
    font-size: 10px;
    font-weight: 700;
    fill: #8a9299;
    text-anchor: start;
  }

  /* move dialog */
  .dialog {
    position: absolute;
    left: 891px;
    top: 70px;
    width: 167px;
    height: 262px;
    box-sizing: border-box;
    border: 1px solid #cfcfcf;
    background: #f2f2f2;
  }

  .dialog-head {
    display: flex;
    align-items: center;
    gap: 5px;
    height: 15px;
    padding-left: 3px;
    border-bottom: 1px solid #cfcfcf;
    font-size: 7px;
    letter-spacing: -0.1px;
    color: #444;
  }

  .dialog-body {
    height: 222px;
    margin-top: -1px;
  }

  .field {
    display: flex;
    align-items: center;
    height: 20px;
    padding-left: 8px;
  }

  .field label,
  .field .label {
    width: 49px;
    padding-top: 1px;
    color: #adadad;
    font-size: 7.8px;
    letter-spacing: -0.2px;
    white-space: nowrap;
  }

  .field input {
    width: 87px;
    height: 17px;
    box-sizing: border-box;
    padding: 1px 2px 0;
    border: 1px solid #cdcdcd;
    background: #fff;
    font: inherit;
    font-size: 7.6px;
    letter-spacing: -0.25px;
    color: #222;
  }

  .picker {
    display: flex;
    align-items: center;
    gap: 3px;
    width: 86px;
    padding-left: 1px;
    color: #aaa;
    letter-spacing: -0.2px;
    opacity: 0.85;
  }

  .picker .caret {
    margin-left: auto;
    margin-right: 3px;
    border-top-color: #777;
  }

  .selected {
    display: flex;
    align-items: center;
    gap: 2px;
    width: 50px;
    height: 18px;
    padding-left: 2px;
    background: #8bcde6;
    color: #b4e3f3;
    font-size: 7.8px;
    letter-spacing: -0.15px;
    white-space: nowrap;
  }

  .selected svg {
    width: 10px;
    height: 12px;
  }

  .clear {
    width: 8px;
    height: 8px;
    margin-left: 6px;
  }

  .types {
    display: flex;
    gap: 4.5px;
  }

  .type {
    display: grid;
    place-items: center;
    width: 15px;
    height: 18px;
  }

  .type svg {
    width: 13px;
    height: 13px;
  }

  .pivot {
    width: 13px;
    height: 13px;
    margin-left: 1px;
  }

  .type.on {
    background: #8bcde6;
  }

  .check {
    width: 7px;
    height: 7px;
    margin-left: 3px;
    border: 1px solid #b5b5b5;
    border-radius: 2px;
    background: #e8e8e8;
  }

  .dialog-foot {
    display: flex;
    align-items: center;
    height: 22px;
    border-top: 1px solid #cfcfcf;
    padding-left: 4px;
  }

  .info {
    width: 10px;
    height: 10px;
    margin-right: 57px;
  }

  .dialog-foot button {
    width: 40px;
    height: 13px;
    border: 1px solid #c6c6c6;
    color: #b3b3b3;
    line-height: 11px;
  }

  .dialog-foot .cancel {
    margin-left: 7px;
  }

  .comments {
    position: absolute;
    left: 3px;
    top: 548px;
    width: 200px;
    padding-left: 15px;
  }

  .navbar {
    position: absolute;
    left: 560px;
    top: 549px;
    width: 158px;
    height: 17px;
  }

  .hint {
    position: absolute;
    right: 12px;
    top: 552px;
    font-size: 8px;
    font-weight: bold;
    letter-spacing: -0.2px;
    color: #222;
  }

  .timeline {
    display: flex;
    flex: none;
    height: 33px;
    background: #f1f1f1;
    box-sizing: border-box;
    border-top: 1px solid #c2c2c2;
  }

  .playback {
    width: 90px;
    height: 33px;
  }

  .history {
    width: 60px;
    height: 33px;
  }

  .recorder {
    width: 46px;
    height: 26px;
    margin-left: auto;
    margin-right: 9px;
    filter: drop-shadow(0 0 2px #666);
  }

  /* windows taskbar */
  .taskbar {
    display: flex;
    flex: none;
    height: 25px;
    background: #1d2d35;
    color: #eee;
    font-family: "Open Sans", "DejaVu Sans", sans-serif;
  }

  .task {
    width: 32.6px;
    height: 25px;
  }

  .task-wide {
    display: flex;
    align-items: center;
    gap: 2px;
    box-sizing: border-box;
    border-bottom: 1px solid #76b9ed;
    font-size: 8px;
    letter-spacing: -0.2px;
    white-space: nowrap;
  }

  .task-wide svg {
    width: 16px;
    height: 16px;
  }

  .chrome {
    width: 101px;
    margin: 0 3px 0 4px;
    padding-left: 4px;
  }

  .hebrew {
    font-size: 8.7px;
    letter-spacing: 0;
  }

  .fusion {
    width: 107px;
    padding-left: 7px;
    background: #48565d;
  }

  .snagit {
    width: 101px;
    margin-left: 4px;
    padding-left: 4px;
  }

  .tray {
    display: flex;
    align-items: center;
    margin-left: auto;
    margin-right: 2px;
    padding-right: 13px;
    border-right: 1px solid #52606a;
    font-size: 8px;
    letter-spacing: -0.3px;
  }

  .tray-icons {
    width: 28px;
    height: 12px;
    margin-right: 4px;
  }

  .clock {
    display: flex;
    flex-direction: column;
    align-items: center;
    width: 38px;
    margin: 0 9px 0 7px;
    line-height: 11.5px;
  }

  .notice {
    width: 12px;
    height: 12px;
  }
</style>
